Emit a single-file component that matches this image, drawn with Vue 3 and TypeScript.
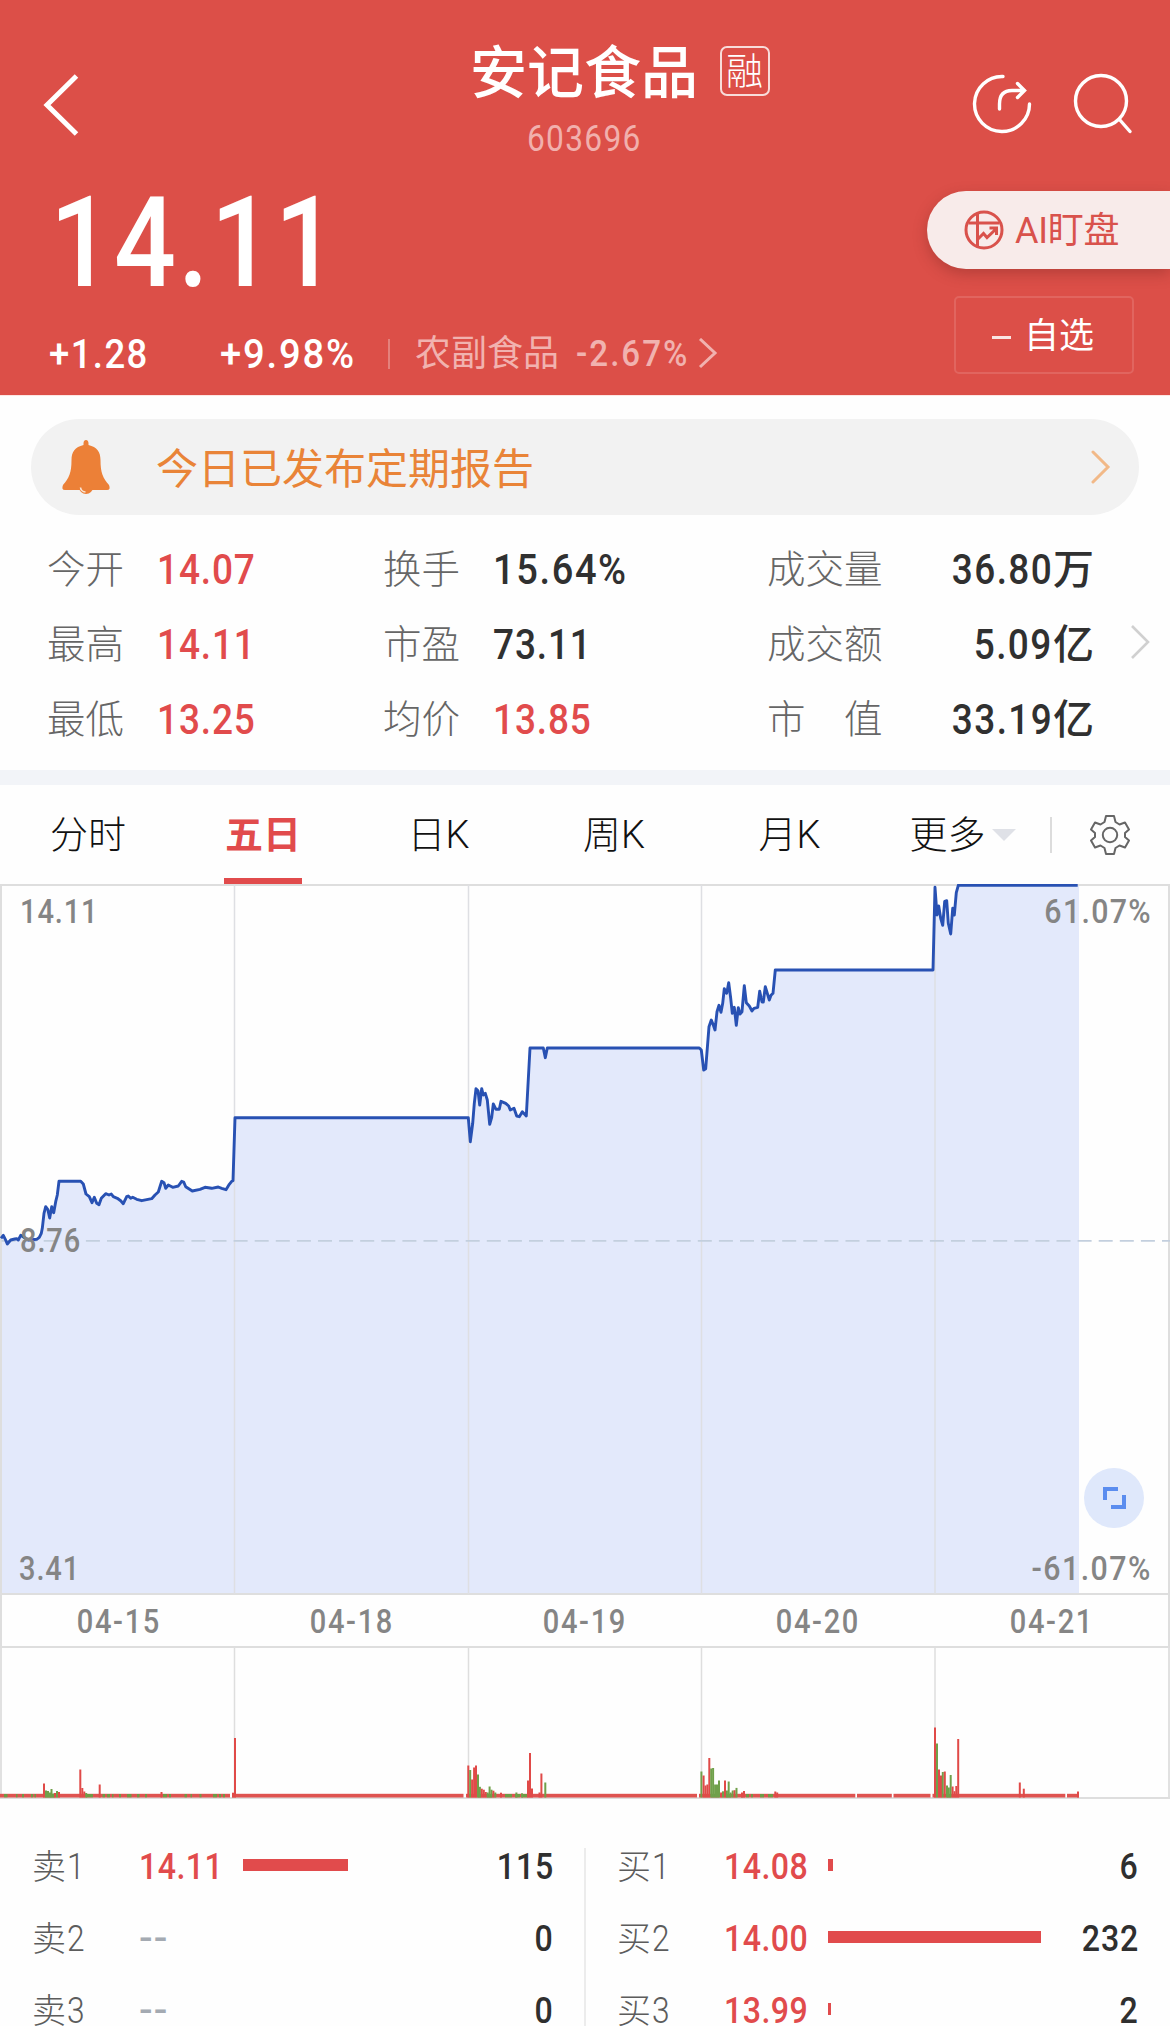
<script setup lang="ts">
type Tone = 'up' | 'down'
interface Stat { label: string; value: string; tone?: 'red' }
interface Order { label: string; price: string; qty: string; bar: number }
type Point = [number, number]

const openStats: Stat[] = [
  { label: '今开', value: '14.07', tone: 'red' },
  { label: '最高', value: '14.11', tone: 'red' },
  { label: '最低', value: '13.25', tone: 'red' },
]
const ratioStats: Stat[] = [
  { label: '换手', value: '15.64%' },
  { label: '市盈', value: '73.11' },
  { label: '均价', value: '13.85', tone: 'red' },
]
const volumeStats = [
  { label: '成交量', value: '36.80', unit: '万' },
  { label: '成交额', value: '5.09', unit: '亿' },
  { label: '市　值', value: '33.19', unit: '亿' },
]
const tabs = ['分时', '五日', '日K', '周K', '月K']
const days = ['04-15', '04-18', '04-19', '04-20', '04-21']
const sells: Order[] = [
  { label: '卖1', price: '14.11', qty: '115', bar: 105 },
  { label: '卖2', price: '--', qty: '0', bar: 0 },
  { label: '卖3', price: '--', qty: '0', bar: 0 },
]
const buys: Order[] = [
  { label: '买1', price: '14.08', qty: '6', bar: 5 },
  { label: '买2', price: '14.00', qty: '232', bar: 213 },
  { label: '买3', price: '13.99', qty: '2', bar: 3 },
]

// Price samples: each run has an origin and points stored in thirds of a unit.
const runs: { x: number; y: number; pts: Point[] }[] = [
  { x: 0, y: 246, pts: [[3,325],[10,316],[16,328],[22,342],[32,330],[44,327],[50,326],[55,330],[62,316],[75,324],[85,330],[110,328],[118,322],[124,310],[127,295],[132,250],[137,230],[143,238],[149,264],[155,230],[161,248],[167,215],[172,195],[177,154],[242,154],[250,162],[258,192],[268,200],[276,218],[283,202],[290,220],[297,224],[304,205],[317,191],[327,195],[334,192],[340,200],[352,205],[362,212],[370,221],[380,200],[385,198],[392,205],[398,202],[410,208],[425,212],[440,209],[455,206],[465,195],[475,186],[485,154],[492,158],[497,175],[505,165],[518,172],[535,168],[545,154],[551,156],[557,170],[577,183],[600,178],[615,172],[635,175],[655,171],[665,175],[678,179],[688,163],[695,154],[699,152],[705,-37]] },
  { x: 440, y: 136, pts: [[85,293],[91,365],[98,310],[103,250],[108,206],[114,212],[119,255],[125,206],[130,225],[136,220],[142,240],[149,313],[155,292],[160,252],[168,268],[178,268],[183,244],[197,250],[206,258],[211,270],[222,265],[230,288],[238,290],[247,275],[259,288],[270,84],[310,84],[316,113],[322,84],[778,84]] },
  { x: 690, y: -14, pts: [[34,540],[41,600],[47,596],[57,470],[64,450],[70,465],[75,480],[81,425],[87,406],[93,427],[98,400],[103,356],[110,370],[116,338],[122,385],[127,430],[133,412],[139,466],[145,413],[150,432],[156,425],[163,347],[169,398],[178,408],[186,423],[192,415],[203,412],[209,364],[216,396],[220,396],[226,350],[238,390],[243,376],[249,370],[256,300],[729,300],[735,52],[741,135],[746,108],[752,145],[758,166],[764,94],[770,92],[775,160],[782,192],[788,115],[793,135],[799,68],[805,46],[1163,46]] },
]
const line = runs
  .flatMap(r => r.pts.map(([px, py]) => `${(r.x + px / 3).toFixed(1)},${(r.y + py / 3).toFixed(1)}`))
  .join(' ')
const area = `0,710 ${line} 1079,1 1079,710`
const gridX = [234.5, 468.5, 701.5, 935]

// Volume bars: [x, height, tone]
const vol: [number, number, Tone][] = [
  [44,14,'up'],[46,7,'down'],[48,6.5,'down'],[50,5,'down'],[51.5,8.5,'down'],[53.5,4,'down'],[55,4.5,'up'],[57,6.5,'down'],[59,5.5,'up'],
  [80.3,28,'up'],[82.3,9.5,'up'],[84.3,6,'up'],[86.2,4.5,'down'],[99.7,13,'up'],[161.5,5.5,'up'],[233,4.8,'up'],[235,59.5,'up'],
  [468.3,32,'up'],[470.2,27.5,'down'],[472.1,18,'up'],[474.1,30,'up'],[476,32,'up'],[478,23,'down'],[479.9,10.7,'down'],[481.8,8.8,'up'],[483.8,7.8,'up'],
  [485.8,5.5,'up'],[487.7,5,'down'],[489.6,11,'down'],[491.5,7.8,'down'],[493.4,6.8,'up'],[495.3,5,'down'],[501,4.8,'up'],[516.4,5,'down'],[522,4.2,'down'],
  [528,17,'up'],[530,44.5,'up'],[532,9,'up'],[539.5,5,'up'],[541.4,24,'up'],[545.3,15,'down'],
  [701.4,26,'down'],[703.6,22,'up'],[705.5,12,'up'],[707.4,13,'up'],[709.3,39.5,'up'],[711.2,29,'down'],[713.1,29.5,'down'],[715.1,13,'down'],[717,13,'down'],[719,17,'down'],
  [721.1,5,'up'],[723,6.2,'down'],[725,17,'up'],[726.9,7,'down'],[728.7,16,'down'],[730.6,5,'down'],[732.7,7,'down'],[734.6,7.3,'up'],[736.5,9.6,'down'],
  [742,5,'up'],[744,6.5,'up'],[775.3,6,'up'],[777.2,5,'up'],
  [935,70,'up'],[937,54,'down'],[939,28,'up'],[941,22,'up'],[942.8,25.5,'down'],[944.8,26,'up'],[947,12,'down'],[948.8,10,'down'],[950.7,22.5,'down'],
  [952.6,11,'up'],[954.5,6.3,'up'],[956.3,11.5,'up'],[958.2,58.5,'up'],[1019.8,15,'up'],[1023.8,8.8,'up'],[1078,6,'up'],
]
const baseRuns: Point[] = [[0, 230], [232, 463.5], [466, 697], [699, 855.3], [857, 891.8], [893.5, 930.5], [932.5, 1065.3], [1067, 1079]]
const greenRuns: Point[] = [
  [4,7.5],[16,17.5],[22,24],[31,33],[34.5,36],[45,54],[86,93],[102.5,105],[107,110],[112,113.5],[119,121],[127,131.5],[137,139.5],[145,147],
  [163,167],[169,171],[184.5,187],[190.5,192],[199.5,201.5],[213,217],[219,221],[223,225],[478,481],[487,492],[505,512],[515,520],[522,527.5],
  [711,719],[726,731],[741,743],[746,749],[751,753],[760,764],[768,773],[947,951],
]
</script>

<template>
  <main class="page">
    <header class="hero">
      <div class="topbar">
        <svg class="back" width="40" height="68" viewBox="0 0 40 68"><path d="M35.500 6 6 35.000 35.500 64" fill="none" stroke="#fff" stroke-width="5" /></svg>
        <div class="names">
          <h1>安记食品</h1>
          <p><span class="num code">603696</span></p>
        </div>
        <span class="margin-tag">融</span>
        <svg class="share" width="64" height="64" viewBox="0 0 64 64" fill="none" stroke="#fff" stroke-width="3.400" stroke-linecap="round">
          <path d="M33 4.500A27.500 27.500 0 1 0 59.500 32M29.500 37V32Q29.500 18.500 42 18.500H54M47.500 11.500 54.500 18.500 47.500 25.500" />
        </svg>
        <svg class="search" width="64" height="64" viewBox="0 0 64 64" fill="none" stroke="#fff" stroke-width="3.400" stroke-linecap="round">
          <circle cx="30" cy="29" r="25.500" /><path d="M48.500 47.500 59 59.500" />
        </svg>
      </div>
      <div class="quote">
        <div class="quote-left">
          <div class="price"><span class="num">14.11</span></div>
          <div class="change">
            <span class="delta"><span class="num">+1.28</span></span>
            <span class="percent"><span class="num">+9.98%</span></span>
            <i class="bar-sep"></i>
            <span class="sector">农副食品</span>
            <span class="sector-pct"><span class="num">-2.67%</span></span>
            <svg width="20" height="32" viewBox="0 0 20 32"><path d="M2 1 17 15 2 29" fill="none" stroke="#f1b2af" stroke-width="3" /></svg>
          </div>
        </div>
        <div class="quote-right">
          <div class="watch">
            <svg width="42" height="42" viewBox="0 0 42 42" fill="none" stroke="#d9524c" stroke-width="3">
              <circle cx="21" cy="21" r="18" /><path d="M14.500 5V37M5.500 14H36.500M15 30 20.500 24.500 24 28.500 33 20M26.500 19H33.500V26" />
            </svg>
            <span>AI盯盘</span>
          </div>
          <div class="favorite"><i></i><span>自选</span></div>
        </div>
      </div>
    </header>

    <section class="notice">
      <svg width="50" height="56" viewBox="0 0 50 56">
        <path d="M22.500 4.500Q22.500 1 25 1T27.500 4.500V6C36 8 39.500 13 39.500 21C39.500 34 42 39 48 46Q50 51 46 51H4Q0 51 2 46C8 39 10.500 34 10.500 21C10.500 13 14 8 22.500 6Z" fill="#ec8037" />
        <circle cx="25" cy="48" r="7" fill="#ec8037" /><path d="M19.500 48.500Q20 52.500 24.500 53" fill="none" stroke="#f8e6d8" stroke-width="1.600" />
      </svg>
      <span class="notice-text">今日已发布定期报告</span>
      <svg class="notice-arrow" width="22" height="34" viewBox="0 0 22 34"><path d="M3 2 18 17 3 32" fill="none" stroke="#f2b988" stroke-width="3" stroke-linecap="round" /></svg>
    </section>

    <section class="stats">
      <dl class="col-a">
        <div v-for="s in openStats" :key="s.label"><dt>{{ s.label }}</dt><dd :class="s.tone"><span class="num">{{ s.value }}</span></dd></div>
      </dl>
      <dl class="col-b">
        <div v-for="s in ratioStats" :key="s.label"><dt>{{ s.label }}</dt><dd :class="s.tone"><span class="num" :class="{ wide: s.value.endsWith('%') }">{{ s.value }}</span></dd></div>
      </dl>
      <dl class="col-c">
        <div v-for="s in volumeStats" :key="s.label"><dt>{{ s.label }}</dt><dd><span class="num">{{ s.value }}</span><span class="unit">{{ s.unit }}</span></dd></div>
      </dl>
      <svg class="stats-arrow" width="24" height="38" viewBox="0 0 24 38"><path d="M3 3 19 19 3 35" fill="none" stroke="#d0d0d0" stroke-width="2.600" /></svg>
    </section>

    <nav class="tabs">
      <span v-for="(t, i) in tabs" :key="t" class="tab" :class="{ active: i === 1 }">{{ t }}</span>
      <span class="tab more">更多</span>
      <i class="caret"></i>
      <i class="tab-sep"></i>
      <svg width="44" height="44" viewBox="0 0 44 44" fill="none" stroke="#666" stroke-width="2" stroke-linejoin="round">
        <path d="M18 3H26L27.500 9 31.500 11.500 37 9.500 41 16.500 37 20V24L41 27.500 37 34.500 31.500 32.500 27.500 35 26 41H18L16.500 35 12.500 32.500 7 34.500 3 27.500 7 24V20L3 16.500 7 9.500 12.500 11.500 16.500 9Z" />
        <circle cx="22" cy="22" r="7.200" />
      </svg>
    </nav>

    <section class="chart">
      <svg width="1170" height="711" viewBox="0 0 1170 711">
        <polygon :points="area" fill="#e3e9fb" />
        <path d="M0 1H1170M0 710H1170M1 0V711M1169 0V711" stroke="#dedede" stroke-width="2" />
        <path v-for="x in gridX" :key="x" :d="`M${x} 1V710`" stroke="#dedfe3" stroke-width="1.500" />
        <path d="M1.500 356.800H1170" stroke="#c3cfde" stroke-width="1.800" stroke-dasharray="14 7.100" />
        <polyline :points="line" fill="none" stroke="#2851b3" stroke-width="2.900" stroke-linejoin="round" />
      </svg>
      <span class="axis tl"><span class="num">14.11</span></span>
      <span class="axis tr"><span class="num">61.07%</span></span>
      <span class="axis ml"><span class="num">8.76</span></span>
      <span class="axis bl"><span class="num">3.41</span></span>
      <span class="axis br"><span class="num">-61.07%</span></span>
      <span class="expand">
        <svg width="26" height="26" viewBox="0 0 26 26" fill="none" stroke="#5b8def" stroke-width="4"><path d="M4 15V4H17M10 22H23V10" /></svg>
      </span>
    </section>

    <div class="dates"><span v-for="d in days" :key="d"><span class="num">{{ d }}</span></span></div>

    <svg class="volume" width="1170" height="153" viewBox="0 0 1170 153">
      <path v-for="x in gridX" :key="x" :d="`M${x} 0V151`" stroke="#dedede" stroke-width="1.500" />
      <path d="M0 1H1170M0 152H1170M1 0V153M1169 0V153" stroke="#dedede" stroke-width="1.800" />
      <rect v-for="b in baseRuns" :key="b[0]" :x="b[0]" y="147.800" :width="b[1] - b[0]" height="3.700" fill="#df5350" />
      <rect v-for="g in greenRuns" :key="'g' + g[0]" :x="g[0]" y="148" :width="g[1] - g[0]" height="3.300" fill="#6d9c45" />
      <rect v-for="v in vol" :key="'v' + v[0]" :x="v[0] - 1" :y="151.500 - v[1]" width="2" :height="v[1]" :fill="v[2] === 'up' ? '#e04a48' : '#6fa04a'" />
    </svg>

    <section class="book">
      <ul class="side sell">
        <li v-for="o in sells" :key="o.label">
          <span class="who">{{ o.label[0] }}<span class="num">{{ o.label[1] }}</span></span>
          <span class="ask" :class="{ none: o.price === '--' }"><span class="num">{{ o.price }}</span></span>
          <i :style="{ width: o.bar + 'px' }"></i>
          <b><span class="num">{{ o.qty }}</span></b>
        </li>
      </ul>
      <ul class="side buy">
        <li v-for="o in buys" :key="o.label">
          <span class="who">{{ o.label[0] }}<span class="num">{{ o.label[1] }}</span></span>
          <span class="ask"><span class="num">{{ o.price }}</span></span>
          <i :style="{ width: o.bar + 'px' }"></i>
          <b><span class="num">{{ o.qty }}</span></b>
        </li>
      </ul>
    </section>
  </main>
</template>

<style>
html, body { margin: 0; background: #fefefe; }
</style>

<style scoped>
.page {
  width: 1170px; height: 2026px; overflow: hidden; background: #fefefe;
  font-family: Roboto, "Noto Sans CJK SC", sans-serif; color: #2f2f2f; white-space: nowrap;
}
.page * { box-sizing: border-box; }
h1, p, dl, dd, ul { margin: 0; padding: 0; }
i, b { font-style: normal; }
svg { display: block; flex: none; }
.num { display: inline-block; transform: scaleX(.88); transform-origin: 0 50%; letter-spacing: 1px; }

.hero { height: 396px; background: #dc4f48; border-bottom: 1px solid #fde6e3; color: #fff; }
.topbar { display: flex; height: 180px; }
.back { margin: 70px 0 0 41px; }
.names { margin: 39px 0 0 389px; width: 233px; }
.names h1 { font-size: 57px; line-height: 70px; font-weight: 500; }
.names p { margin: 5px 0 0 57px; font-size: 36px; line-height: 50px; color: #f1b0ad; }
.names .code { letter-spacing: 1.500px; }
.margin-tag {
  margin: 46px 0 0 17px; width: 50px; height: 50px; border: 2px solid #f8dcda; border-radius: 7px;
  font-size: 37px; line-height: 50px; font-weight: 300; text-align: center; text-indent: -1px;
}
.share { margin: 72px 0 0 200px; }
.search { margin: 72px 0 0 37px; }

.quote { display: flex; justify-content: space-between; }
.price { height: 124px; padding-left: 50px; font-size: 126px; line-height: 126px; font-weight: 500; }
.price .num { letter-spacing: 2.500px; transform: scaleX(.865); }
.change { display: flex; align-items: center; height: 60px; margin-top: 20px; font-size: 41.500px; line-height: 60px; }
.delta, .percent { font-weight: 500; }
.delta { width: 171px; margin-left: 49px; }
.delta .num { letter-spacing: 1.600px; }
.percent { width: 168px; }
.percent .num { letter-spacing: 2px; transform: scaleX(.92); }
.bar-sep { width: 2px; height: 30px; background: #e4817c; }
.sector { width: 161px; margin-left: 25px; font-size: 36px; color: #f1b2af; }
.sector-pct { width: 122px; font-size: 36px; font-weight: 500; color: #f1b2af; }
.sector-pct .num { letter-spacing: 2.200px; transform: scaleX(.92); }
.quote-right { width: 243px; padding-top: 11px; }
.watch {
  display: flex; align-items: center; height: 78px; padding-left: 36px; border-radius: 39px 0 0 39px;
  background: #f8ebea; color: #d9524c; box-shadow: 0 5px 14px rgba(120, 40, 35, .38); font-size: 36px;
}
.watch span { margin: -6px 0 0 10px; letter-spacing: -.3px; }
.favorite {
  display: flex; align-items: center; width: 180px; height: 78px; margin: 27px 0 0 27px; padding-left: 36px;
  border: 2px solid #e1655f; border-radius: 5px; font-size: 35px;
}
.favorite i { width: 19px; height: 3px; margin-top: 4px; background: #fff; opacity: .85; }
.favorite span { margin: -5px 0 0 13px; }

.notice {
  display: flex; align-items: center; width: 1108px; height: 96px; margin: 23px 0 0 31px; padding: 0 27px 0 30px;
  border-radius: 48px; background: #f2f2f2;
}
.notice-text { margin: -3px 0 0 45px; font-size: 42px; color: #e98438; font-weight: 400; }
.notice-arrow { margin-left: auto; }

.stats { display: flex; height: 255px; padding: 18px 0 0 47px; }
.stats dl div { display: flex; height: 75px; line-height: 78px; align-items: center; }
dt { width: 110px; font-size: 38.500px; color: #666; font-weight: 300; margin-top: -2px; }
dd { font-size: 42px; font-weight: 500; color: #303030; margin-top: -1px; }
dd.red { color: #e14b4c; }
.stats .wide { letter-spacing: 1.800px; transform: scaleX(.905); }
.col-a { width: 336px; }
.col-b { width: 384px; }
.col-c { width: 327px; }
.col-c dt { width: 130px; }
.col-c dd { flex: 1; text-align: right; }
.col-c .num { transform-origin: 100% 50%; letter-spacing: 1.600px; }
.unit { font-size: 41px; }
.stats-arrow { margin: 90px 0 0 35px; }

.tabs {
  display: flex; align-items: center; border-top: 15px solid #f2f4f8; height: 114px;
  font-size: 38px; font-weight: 300; color: #111;
}
.tab { display: flex; align-items: center; justify-content: center; height: 99px; width: 78px; margin-left: 49px; border-bottom: 6px solid transparent; }
.tab + .tab { margin-left: 97.500px; }
.tabs .tab.active { color: #e14b4c; font-weight: 700; border-bottom-color: #e14b4c; margin-left: 97px; }
.tabs .tab.more { margin-left: 80px; }
.caret { margin-left: 5.500px; border: 12.500px solid transparent; border-top: 12px solid #dfe1e7; border-bottom: 0; }
.tab-sep { width: 2px; height: 36px; margin: 0 36px 0 34px; background: #dcdcdc; }

.chart { position: relative; height: 711px; }
.axis { position: absolute; font-size: 33px; line-height: 40px; color: #858585; font-weight: 500; }
.tl { left: 20px; top: 8px; }
.ml { left: 20px; top: 337px; }
.bl { left: 19px; top: 665px; }
.tr { right: 18px; top: 8px; }
.br { right: 18px; top: 665px; }
.tr .num, .br .num { transform-origin: 100% 50%; transform: scaleX(.92); letter-spacing: 1.400px; }
.br .num { letter-spacing: 1.600px; }
.expand {
  position: absolute; left: 1084px; top: 584px; width: 60px; height: 60px; border-radius: 50%; background: #dfe8fb;
  display: flex; align-items: center; justify-content: center;
}
.dates { display: flex; height: 51px; border: solid #dedede; border-width: 0 2px; }
.dates > span { flex: 1; text-align: center; font-size: 33px; line-height: 53px; color: #858585; font-weight: 500; }
.dates .num { transform-origin: 50% 50%; letter-spacing: 1.900px; }

.book { display: flex; padding-top: 30px; }
.side { list-style: none; height: 200px; margin-top: 19px; }
.sell { width: 586px; border-right: 2px solid #ececec; padding-left: 32px; padding-right: 30px; }
.buy { width: 584px; padding-left: 31px; padding-right: 31px; }
.side li { display: flex; align-items: center; height: 72px; line-height: 40px; position: relative; top: -17px; }
.who { width: 107px; font-size: 34px; font-weight: 300; color: #5c5c5c; }
.who .num { font-size: 36px; margin-left: 1px; }
.ask { width: 104px; font-size: 36.500px; font-weight: 500; color: #e14b4c; }
.ask .num { letter-spacing: .5px; }
.ask.none { color: #a4aab2; }
.ask.none .num { letter-spacing: 1px; transform: scaleX(1.100); }
.side i { height: 12px; background: #e14b4c; margin-top: -4px; }
.side b { margin-left: auto; font-size: 36.500px; font-weight: 500; }
.side b .num { transform-origin: 100% 50%; }
</style>
